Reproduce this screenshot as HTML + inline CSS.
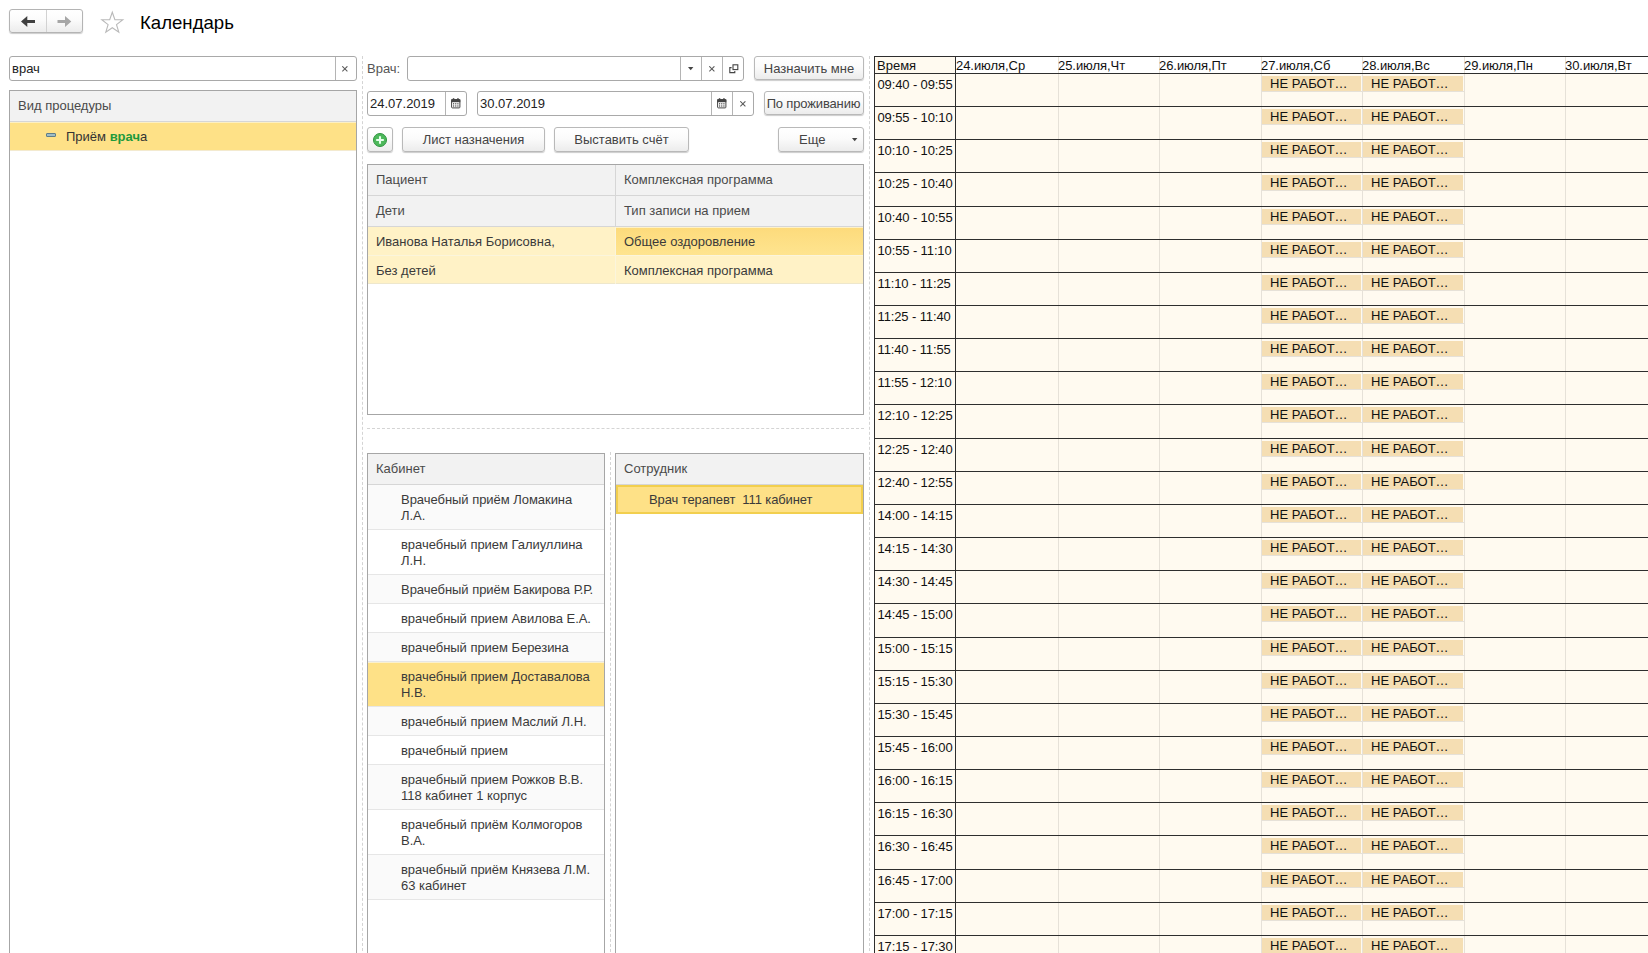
<!DOCTYPE html>
<html lang="ru"><head><meta charset="utf-8"><title>Календарь</title>
<style>
html,body{margin:0;padding:0}
body{width:1648px;height:953px;overflow:hidden;background:#fff;position:relative;font-family:"Liberation Sans",Arial,sans-serif;font-size:13px;color:#3a3a3a}
.a{position:absolute;box-sizing:border-box}
.t{position:absolute;white-space:nowrap;line-height:16px}
.inp{position:absolute;box-sizing:border-box;border:1px solid #a9a9a9;border-radius:3px;background:#fff}
.dv{position:absolute;top:0;bottom:0;width:1px;background:#b4b4b4}
.btn{position:absolute;box-sizing:border-box;border:1px solid #b9b9b9;border-radius:3px;background:linear-gradient(#ffffff 0%,#fbfbfb 45%,#ececec 100%);box-shadow:0 1px 1px rgba(0,0,0,.2);text-align:center;white-space:nowrap;color:#444}
.pan{position:absolute;box-sizing:border-box;border:1px solid #a6a6a6;background:#fff;overflow:hidden}
.hd{position:absolute;left:0;right:0;background:#f2f2f2;border-bottom:1px solid #d6d6d6;box-sizing:border-box}
.row{position:absolute;left:0;right:0;box-sizing:border-box;border-bottom:1px solid #e6e6e6}
.vd{position:absolute;width:0;border-left:1px dashed #d4d4d4}
.hdash{position:absolute;height:0;border-top:1px dashed #d4d4d4}
.cal{position:absolute;left:874px;top:56px;width:774px;height:897px;background:#fffaf0;overflow:hidden}
.hl{position:absolute;left:0;right:0;height:1px;background:#2e2e2e}
.vl{position:absolute;top:0;bottom:0;width:1px;background:#e6e1d8}
.sl{position:absolute;height:1px;background:#e6e1d8}
.ct{position:absolute;white-space:nowrap;color:#111;line-height:15px;font-size:13px}
.nw{position:absolute;box-sizing:border-box;background:#f5deb3;color:#111;line-height:15px;white-space:nowrap;overflow:hidden}
</style></head><body>
<div class="btn" style="left:9px;top:9px;width:74px;height:24px;border-color:#b4b4b4"></div>
<div class="a" style="left:46px;top:10px;width:1px;height:22px;background:#d2d2d2"></div>
<svg class="a" style="left:9px;top:9px" width="74" height="24" viewBox="0 0 74 24">
<path d="M12 12.5 L18.3 7 L18.3 11 L26 11 L26 14 L18.3 14 L18.3 18 Z" fill="#404040"/>
<path d="M62.3 12.5 L56 7 L56 11 L48.5 11 L48.5 14 L56 14 L56 18 Z" fill="#a6a6a6"/>
</svg>
<svg class="a" style="left:100px;top:10px" width="25" height="25" viewBox="0 0 25 25"><path d="M12.3 2.2 L14.9 9.6 L22.8 9.8 L16.5 14.6 L18.8 22.2 L12.3 17.7 L5.8 22.2 L8.1 14.6 L1.8 9.8 L9.7 9.6 Z" fill="#fff" stroke="#b9b9b9" stroke-width="1.1" stroke-linejoin="miter"/></svg>
<div class="t" style="left:140px;top:11px;font-size:18.6px;line-height:24px;color:#000">Календарь</div>
<div class="inp" style="left:9px;top:56px;width:348px;height:25px"><div class="dv" style="left:325px"></div></div>
<div class="t" style="left:12px;top:61px;color:#222">врач</div>
<svg class="a" style="left:342px;top:66px" width="6" height="6" viewBox="0 0 6 6"><path d="M0.3 0.3 L5.4 5.4 M5.4 0.3 L0.3 5.4" stroke="#5a5a5a" stroke-width="1.05" fill="none"/></svg>
<div class="pan" style="left:9px;top:90px;width:348px;height:880px">
 <div class="hd" style="top:0;height:31px"></div>
 <div class="row" style="top:31px;height:29px;background:#fee187;border-top:1px solid #fdf0c4;border-bottom:1px solid #f3ead0"></div>
</div>
<div class="t" style="left:18px;top:98px;color:#4a4a4a">Вид процедуры</div>
<div class="a" style="left:46px;top:133px;width:10px;height:4px;background:#9fbcc4;border:1px solid #5f7d88;border-radius:1px"></div>
<div class="t" style="left:66px;top:129px;color:#333">Приём <span style="color:#1f9a3c;font-weight:bold">врач</span><span style="color:#333">а</span></div>
<div class="vd" style="left:362px;top:56px;height:900px"></div>
<div class="vd" style="left:869px;top:56px;height:900px"></div>
<div class="vd" style="left:610px;top:452px;height:510px"></div>
<div class="hdash" style="left:367px;top:428px;width:497px"></div>
<div class="t" style="left:367px;top:61px;color:#555">Врач:</div>
<div class="inp" style="left:407px;top:56px;width:337px;height:25px"><div class="dv" style="left:272px"></div><div class="dv" style="left:293px"></div><div class="dv" style="left:314px"></div></div>
<svg class="a" style="left:688px;top:67px" width="6" height="4"><path d="M0 0 L5.4 0 L2.7 3.2 Z" fill="#444"/></svg>
<svg class="a" style="left:709px;top:66px" width="6" height="6" viewBox="0 0 6 6"><path d="M0.3 0.3 L5.4 5.4 M5.4 0.3 L0.3 5.4" stroke="#5a5a5a" stroke-width="1.05" fill="none"/></svg>
<svg class="a" style="left:729px;top:64px" width="10" height="10" viewBox="0 0 10 10"><rect x="4" y="0.8" width="4.8" height="4.8" fill="none" stroke="#444" stroke-width="1.1"/><path d="M2.6 3.6 H0.8 V8.6 H5.8 V7" fill="none" stroke="#444" stroke-width="1.1"/></svg>
<div class="btn" style="left:754px;top:56px;width:110px;height:24px;line-height:23px">Назначить мне</div>

<div class="inp" style="left:367px;top:91px;width:100px;height:25px"><div class="dv" style="left:77px"></div></div>
<div class="t" style="left:370px;top:96px;color:#222">24.07.2019</div>
<div class="inp" style="left:477px;top:91px;width:277px;height:25px"><div class="dv" style="left:233px"></div><div class="dv" style="left:254px"></div></div>
<div class="t" style="left:480px;top:96px;color:#222">30.07.2019</div>
<svg class="a" style="left:740px;top:101px" width="6" height="6" viewBox="0 0 6 6"><path d="M0.3 0.3 L5.4 5.4 M5.4 0.3 L0.3 5.4" stroke="#5a5a5a" stroke-width="1.05" fill="none"/></svg>
<div class="btn" style="left:764px;top:91px;width:100px;height:24px;line-height:23px;letter-spacing:-0.15px;padding-right:1px">По проживанию</div>
<svg class="a" style="left:451px;top:98px" width="10" height="11" viewBox="0 0 10 11"><rect x="0.6" y="1.6" width="8.3" height="8.3" rx="0.8" fill="#fff" stroke="#444" stroke-width="1"/><rect x="0.2" y="1.2" width="9.1" height="3" fill="#444"/><rect x="1.8" y="0.2" width="1.5" height="1.6" fill="#444"/><rect x="6.2" y="0.2" width="1.5" height="1.6" fill="#444"/><g fill="#444"><rect x="2" y="5.2" width="1.2" height="1.2"/><rect x="4.15" y="5.2" width="1.2" height="1.2"/><rect x="6.3" y="5.2" width="1.2" height="1.2"/><rect x="2" y="7.4" width="1.2" height="1.2"/><rect x="4.15" y="7.4" width="1.2" height="1.2"/><rect x="6.3" y="7.4" width="1.2" height="1.2"/></g></svg><svg class="a" style="left:717px;top:98px" width="10" height="11" viewBox="0 0 10 11"><rect x="0.6" y="1.6" width="8.3" height="8.3" rx="0.8" fill="#fff" stroke="#444" stroke-width="1"/><rect x="0.2" y="1.2" width="9.1" height="3" fill="#444"/><rect x="1.8" y="0.2" width="1.5" height="1.6" fill="#444"/><rect x="6.2" y="0.2" width="1.5" height="1.6" fill="#444"/><g fill="#444"><rect x="2" y="5.2" width="1.2" height="1.2"/><rect x="4.15" y="5.2" width="1.2" height="1.2"/><rect x="6.3" y="5.2" width="1.2" height="1.2"/><rect x="2" y="7.4" width="1.2" height="1.2"/><rect x="4.15" y="7.4" width="1.2" height="1.2"/><rect x="6.3" y="7.4" width="1.2" height="1.2"/></g></svg><div class="btn" style="left:367px;top:127px;width:26px;height:25px"></div>
<svg class="a" style="left:372px;top:132px" width="16" height="16" viewBox="0 0 16 16"><circle cx="8" cy="8" r="6.5" fill="#4cb85a" stroke="#2f9440" stroke-width="1"/><path d="M8 4.2 V11.8 M4.2 8 H11.8" stroke="#e6ffec" stroke-width="2.1"/></svg>
<div class="btn" style="left:402px;top:127px;width:143px;height:25px;line-height:24px">Лист назначения</div>
<div class="btn" style="left:554px;top:127px;width:135px;height:25px;line-height:24px">Выставить счёт</div>
<div class="btn" style="left:778px;top:127px;width:86px;height:25px;line-height:24px;text-align:left;padding-left:20px">Еще</div>
<svg class="a" style="left:852px;top:138px" width="6" height="4"><path d="M0 0 L5.4 0 L2.7 3.2 Z" fill="#444"/></svg>
<div class="pan" style="left:367px;top:164px;width:497px;height:251px">
 <div class="hd" style="top:0;height:31px"></div>
 <div class="hd" style="top:31px;height:31px"></div>
 <div class="row" style="top:62px;height:29px;background:#fff2c6;border-bottom:1px solid #fbf5dc"></div>
 <div class="row" style="top:91px;height:28px;background:#fff2c6;border-bottom:1px solid #eee7cc"></div>
 <div class="a" style="left:248px;top:63px;width:248px;height:27px;background:linear-gradient(#fddb7c,#fee48f)"></div>
 <div class="a" style="left:247px;top:0;width:1px;height:62px;background:#d6d6d6"></div>
 <div class="a" style="left:247px;top:62px;width:1px;height:57px;background:#fbf5dc"></div>
</div>
<div class="t" style="left:376px;top:172px;color:#4a4a4a">Пациент</div>
<div class="t" style="left:624px;top:172px;color:#4a4a4a">Комплексная программа</div>
<div class="t" style="left:376px;top:203px;color:#4a4a4a">Дети</div>
<div class="t" style="left:624px;top:203px;color:#4a4a4a">Тип записи на прием</div>
<div class="t" style="left:376px;top:234px">Иванова Наталья Борисовна,</div>
<div class="t" style="left:624px;top:234px">Общее оздоровление</div>
<div class="t" style="left:376px;top:263px">Без детей</div>
<div class="t" style="left:624px;top:263px">Комплексная программа</div>
<div class="pan" style="left:367px;top:453px;width:238px;height:520px">
 <div class="hd" style="top:0;height:31px"></div>
 <div class="row" style="top:31px;height:45px;background:#fafafa"></div>
 <div class="row" style="top:76px;height:45px;background:#ffffff"></div>
 <div class="row" style="top:121px;height:29px;background:#fafafa"></div>
 <div class="row" style="top:150px;height:29px;background:#ffffff"></div>
 <div class="row" style="top:179px;height:29px;background:#fafafa"></div>
 <div class="row" style="top:208px;height:45px;background:#fee187;border-top:1px solid #fbf1cf"></div>
 <div class="row" style="top:253px;height:29px;background:#fafafa"></div>
 <div class="row" style="top:282px;height:29px;background:#ffffff"></div>
 <div class="row" style="top:311px;height:45px;background:#fafafa"></div>
 <div class="row" style="top:356px;height:45px;background:#ffffff"></div>
 <div class="row" style="top:401px;height:45px;background:#fafafa"></div>
</div>
<div class="t" style="left:376px;top:461px;color:#4a4a4a">Кабинет</div>
<div class="t" style="left:401px;top:492px;letter-spacing:-0.04px">Врачебный приём Ломакина</div>
<div class="t" style="left:401px;top:508px;letter-spacing:-0.04px">Л.А.</div>
<div class="t" style="left:401px;top:537px;letter-spacing:-0.04px">врачебный прием Галиуллина</div>
<div class="t" style="left:401px;top:553px;letter-spacing:-0.04px">Л.Н.</div>
<div class="t" style="left:401px;top:582px;letter-spacing:-0.04px">Врачебный приём Бакирова Р.Р.</div>
<div class="t" style="left:401px;top:611px;letter-spacing:-0.04px">врачебный прием Авилова Е.А.</div>
<div class="t" style="left:401px;top:640px;letter-spacing:-0.04px">врачебный прием Березина</div>
<div class="t" style="left:401px;top:669px;letter-spacing:-0.04px">врачебный прием Доставалова</div>
<div class="t" style="left:401px;top:685px;letter-spacing:-0.04px">Н.В.</div>
<div class="t" style="left:401px;top:714px;letter-spacing:-0.04px">врачебный прием Маслий Л.Н.</div>
<div class="t" style="left:401px;top:743px;letter-spacing:-0.04px">врачебный прием</div>
<div class="t" style="left:401px;top:772px;letter-spacing:-0.04px">врачебный прием Рожков В.В.</div>
<div class="t" style="left:401px;top:788px;letter-spacing:-0.04px">118 кабинет 1 корпус</div>
<div class="t" style="left:401px;top:817px;letter-spacing:-0.04px">врачебный приём Колмогоров</div>
<div class="t" style="left:401px;top:833px;letter-spacing:-0.04px">В.А.</div>
<div class="t" style="left:401px;top:862px;letter-spacing:-0.04px">врачебный приём Князева Л.М.</div>
<div class="t" style="left:401px;top:878px;letter-spacing:-0.04px">63 кабинет</div>
<div class="pan" style="left:615px;top:453px;width:249px;height:520px">
 <div class="hd" style="top:0;height:31px"></div>
 <div class="a" style="left:0;top:31px;width:247px;height:29px;background:#fee187;border:2px solid #f2cf4e"></div>
</div>
<div class="t" style="left:624px;top:461px;color:#4a4a4a">Сотрудник</div>
<div class="t" style="left:649px;top:492px;letter-spacing:-0.1px">Врач терапевт&nbsp; 111 кабинет</div>
<div class="cal">
 <div class="a" style="left:82px;top:0;width:700px;height:17px;background:#fff"></div>
 <div class="vl" style="left:184px"></div>
 <div class="vl" style="left:285px"></div>
 <div class="vl" style="left:387px"></div>
 <div class="vl" style="left:488px"></div>
 <div class="vl" style="left:590px"></div>
 <div class="vl" style="left:691px"></div>
 <div class="hl" style="top:17px"></div>
 <div class="ct" style="left:3.5px;top:21px;letter-spacing:-0.12px">09:40 - 09:55</div>
 <div class="sl" style="left:387px;top:35px;width:203px"></div>
 <div class="nw" style="left:388px;top:20px;width:99px;height:15px;padding-left:8px">НЕ РАБОТ…</div>
 <div class="nw" style="left:489px;top:20px;width:100px;height:15px;padding-left:8px">НЕ РАБОТ…</div>
 <div class="hl" style="top:50px"></div>
 <div class="ct" style="left:3.5px;top:54px;letter-spacing:-0.12px">09:55 - 10:10</div>
 <div class="sl" style="left:387px;top:68px;width:203px"></div>
 <div class="nw" style="left:388px;top:53px;width:99px;height:15px;padding-left:8px">НЕ РАБОТ…</div>
 <div class="nw" style="left:489px;top:53px;width:100px;height:15px;padding-left:8px">НЕ РАБОТ…</div>
 <div class="hl" style="top:83px"></div>
 <div class="ct" style="left:3.5px;top:87px;letter-spacing:-0.12px">10:10 - 10:25</div>
 <div class="sl" style="left:387px;top:101px;width:203px"></div>
 <div class="nw" style="left:388px;top:86px;width:99px;height:15px;padding-left:8px">НЕ РАБОТ…</div>
 <div class="nw" style="left:489px;top:86px;width:100px;height:15px;padding-left:8px">НЕ РАБОТ…</div>
 <div class="hl" style="top:116px"></div>
 <div class="ct" style="left:3.5px;top:120px;letter-spacing:-0.12px">10:25 - 10:40</div>
 <div class="sl" style="left:387px;top:134px;width:203px"></div>
 <div class="nw" style="left:388px;top:119px;width:99px;height:15px;padding-left:8px">НЕ РАБОТ…</div>
 <div class="nw" style="left:489px;top:119px;width:100px;height:15px;padding-left:8px">НЕ РАБОТ…</div>
 <div class="hl" style="top:150px"></div>
 <div class="ct" style="left:3.5px;top:154px;letter-spacing:-0.12px">10:40 - 10:55</div>
 <div class="sl" style="left:387px;top:168px;width:203px"></div>
 <div class="nw" style="left:388px;top:153px;width:99px;height:15px;padding-left:8px">НЕ РАБОТ…</div>
 <div class="nw" style="left:489px;top:153px;width:100px;height:15px;padding-left:8px">НЕ РАБОТ…</div>
 <div class="hl" style="top:183px"></div>
 <div class="ct" style="left:3.5px;top:187px;letter-spacing:-0.12px">10:55 - 11:10</div>
 <div class="sl" style="left:387px;top:201px;width:203px"></div>
 <div class="nw" style="left:388px;top:186px;width:99px;height:15px;padding-left:8px">НЕ РАБОТ…</div>
 <div class="nw" style="left:489px;top:186px;width:100px;height:15px;padding-left:8px">НЕ РАБОТ…</div>
 <div class="hl" style="top:216px"></div>
 <div class="ct" style="left:3.5px;top:220px;letter-spacing:-0.12px">11:10 - 11:25</div>
 <div class="sl" style="left:387px;top:234px;width:203px"></div>
 <div class="nw" style="left:388px;top:219px;width:99px;height:15px;padding-left:8px">НЕ РАБОТ…</div>
 <div class="nw" style="left:489px;top:219px;width:100px;height:15px;padding-left:8px">НЕ РАБОТ…</div>
 <div class="hl" style="top:249px"></div>
 <div class="ct" style="left:3.5px;top:253px;letter-spacing:-0.12px">11:25 - 11:40</div>
 <div class="sl" style="left:387px;top:267px;width:203px"></div>
 <div class="nw" style="left:388px;top:252px;width:99px;height:15px;padding-left:8px">НЕ РАБОТ…</div>
 <div class="nw" style="left:489px;top:252px;width:100px;height:15px;padding-left:8px">НЕ РАБОТ…</div>
 <div class="hl" style="top:282px"></div>
 <div class="ct" style="left:3.5px;top:286px;letter-spacing:-0.12px">11:40 - 11:55</div>
 <div class="sl" style="left:387px;top:300px;width:203px"></div>
 <div class="nw" style="left:388px;top:285px;width:99px;height:15px;padding-left:8px">НЕ РАБОТ…</div>
 <div class="nw" style="left:489px;top:285px;width:100px;height:15px;padding-left:8px">НЕ РАБОТ…</div>
 <div class="hl" style="top:315px"></div>
 <div class="ct" style="left:3.5px;top:319px;letter-spacing:-0.12px">11:55 - 12:10</div>
 <div class="sl" style="left:387px;top:333px;width:203px"></div>
 <div class="nw" style="left:388px;top:318px;width:99px;height:15px;padding-left:8px">НЕ РАБОТ…</div>
 <div class="nw" style="left:489px;top:318px;width:100px;height:15px;padding-left:8px">НЕ РАБОТ…</div>
 <div class="hl" style="top:348px"></div>
 <div class="ct" style="left:3.5px;top:352px;letter-spacing:-0.12px">12:10 - 12:25</div>
 <div class="sl" style="left:387px;top:366px;width:203px"></div>
 <div class="nw" style="left:388px;top:351px;width:99px;height:15px;padding-left:8px">НЕ РАБОТ…</div>
 <div class="nw" style="left:489px;top:351px;width:100px;height:15px;padding-left:8px">НЕ РАБОТ…</div>
 <div class="hl" style="top:382px"></div>
 <div class="ct" style="left:3.5px;top:386px;letter-spacing:-0.12px">12:25 - 12:40</div>
 <div class="sl" style="left:387px;top:400px;width:203px"></div>
 <div class="nw" style="left:388px;top:385px;width:99px;height:15px;padding-left:8px">НЕ РАБОТ…</div>
 <div class="nw" style="left:489px;top:385px;width:100px;height:15px;padding-left:8px">НЕ РАБОТ…</div>
 <div class="hl" style="top:415px"></div>
 <div class="ct" style="left:3.5px;top:419px;letter-spacing:-0.12px">12:40 - 12:55</div>
 <div class="sl" style="left:387px;top:433px;width:203px"></div>
 <div class="nw" style="left:388px;top:418px;width:99px;height:15px;padding-left:8px">НЕ РАБОТ…</div>
 <div class="nw" style="left:489px;top:418px;width:100px;height:15px;padding-left:8px">НЕ РАБОТ…</div>
 <div class="hl" style="top:448px"></div>
 <div class="ct" style="left:3.5px;top:452px;letter-spacing:-0.12px">14:00 - 14:15</div>
 <div class="sl" style="left:387px;top:466px;width:203px"></div>
 <div class="nw" style="left:388px;top:451px;width:99px;height:15px;padding-left:8px">НЕ РАБОТ…</div>
 <div class="nw" style="left:489px;top:451px;width:100px;height:15px;padding-left:8px">НЕ РАБОТ…</div>
 <div class="hl" style="top:481px"></div>
 <div class="ct" style="left:3.5px;top:485px;letter-spacing:-0.12px">14:15 - 14:30</div>
 <div class="sl" style="left:387px;top:499px;width:203px"></div>
 <div class="nw" style="left:388px;top:484px;width:99px;height:15px;padding-left:8px">НЕ РАБОТ…</div>
 <div class="nw" style="left:489px;top:484px;width:100px;height:15px;padding-left:8px">НЕ РАБОТ…</div>
 <div class="hl" style="top:514px"></div>
 <div class="ct" style="left:3.5px;top:518px;letter-spacing:-0.12px">14:30 - 14:45</div>
 <div class="sl" style="left:387px;top:532px;width:203px"></div>
 <div class="nw" style="left:388px;top:517px;width:99px;height:15px;padding-left:8px">НЕ РАБОТ…</div>
 <div class="nw" style="left:489px;top:517px;width:100px;height:15px;padding-left:8px">НЕ РАБОТ…</div>
 <div class="hl" style="top:547px"></div>
 <div class="ct" style="left:3.5px;top:551px;letter-spacing:-0.12px">14:45 - 15:00</div>
 <div class="sl" style="left:387px;top:565px;width:203px"></div>
 <div class="nw" style="left:388px;top:550px;width:99px;height:15px;padding-left:8px">НЕ РАБОТ…</div>
 <div class="nw" style="left:489px;top:550px;width:100px;height:15px;padding-left:8px">НЕ РАБОТ…</div>
 <div class="hl" style="top:581px"></div>
 <div class="ct" style="left:3.5px;top:585px;letter-spacing:-0.12px">15:00 - 15:15</div>
 <div class="sl" style="left:387px;top:599px;width:203px"></div>
 <div class="nw" style="left:388px;top:584px;width:99px;height:15px;padding-left:8px">НЕ РАБОТ…</div>
 <div class="nw" style="left:489px;top:584px;width:100px;height:15px;padding-left:8px">НЕ РАБОТ…</div>
 <div class="hl" style="top:614px"></div>
 <div class="ct" style="left:3.5px;top:618px;letter-spacing:-0.12px">15:15 - 15:30</div>
 <div class="sl" style="left:387px;top:632px;width:203px"></div>
 <div class="nw" style="left:388px;top:617px;width:99px;height:15px;padding-left:8px">НЕ РАБОТ…</div>
 <div class="nw" style="left:489px;top:617px;width:100px;height:15px;padding-left:8px">НЕ РАБОТ…</div>
 <div class="hl" style="top:647px"></div>
 <div class="ct" style="left:3.5px;top:651px;letter-spacing:-0.12px">15:30 - 15:45</div>
 <div class="sl" style="left:387px;top:665px;width:203px"></div>
 <div class="nw" style="left:388px;top:650px;width:99px;height:15px;padding-left:8px">НЕ РАБОТ…</div>
 <div class="nw" style="left:489px;top:650px;width:100px;height:15px;padding-left:8px">НЕ РАБОТ…</div>
 <div class="hl" style="top:680px"></div>
 <div class="ct" style="left:3.5px;top:684px;letter-spacing:-0.12px">15:45 - 16:00</div>
 <div class="sl" style="left:387px;top:698px;width:203px"></div>
 <div class="nw" style="left:388px;top:683px;width:99px;height:15px;padding-left:8px">НЕ РАБОТ…</div>
 <div class="nw" style="left:489px;top:683px;width:100px;height:15px;padding-left:8px">НЕ РАБОТ…</div>
 <div class="hl" style="top:713px"></div>
 <div class="ct" style="left:3.5px;top:717px;letter-spacing:-0.12px">16:00 - 16:15</div>
 <div class="sl" style="left:387px;top:731px;width:203px"></div>
 <div class="nw" style="left:388px;top:716px;width:99px;height:15px;padding-left:8px">НЕ РАБОТ…</div>
 <div class="nw" style="left:489px;top:716px;width:100px;height:15px;padding-left:8px">НЕ РАБОТ…</div>
 <div class="hl" style="top:746px"></div>
 <div class="ct" style="left:3.5px;top:750px;letter-spacing:-0.12px">16:15 - 16:30</div>
 <div class="sl" style="left:387px;top:764px;width:203px"></div>
 <div class="nw" style="left:388px;top:749px;width:99px;height:15px;padding-left:8px">НЕ РАБОТ…</div>
 <div class="nw" style="left:489px;top:749px;width:100px;height:15px;padding-left:8px">НЕ РАБОТ…</div>
 <div class="hl" style="top:779px"></div>
 <div class="ct" style="left:3.5px;top:783px;letter-spacing:-0.12px">16:30 - 16:45</div>
 <div class="sl" style="left:387px;top:797px;width:203px"></div>
 <div class="nw" style="left:388px;top:782px;width:99px;height:15px;padding-left:8px">НЕ РАБОТ…</div>
 <div class="nw" style="left:489px;top:782px;width:100px;height:15px;padding-left:8px">НЕ РАБОТ…</div>
 <div class="hl" style="top:813px"></div>
 <div class="ct" style="left:3.5px;top:817px;letter-spacing:-0.12px">16:45 - 17:00</div>
 <div class="sl" style="left:387px;top:831px;width:203px"></div>
 <div class="nw" style="left:388px;top:816px;width:99px;height:15px;padding-left:8px">НЕ РАБОТ…</div>
 <div class="nw" style="left:489px;top:816px;width:100px;height:15px;padding-left:8px">НЕ РАБОТ…</div>
 <div class="hl" style="top:846px"></div>
 <div class="ct" style="left:3.5px;top:850px;letter-spacing:-0.12px">17:00 - 17:15</div>
 <div class="sl" style="left:387px;top:864px;width:203px"></div>
 <div class="nw" style="left:388px;top:849px;width:99px;height:15px;padding-left:8px">НЕ РАБОТ…</div>
 <div class="nw" style="left:489px;top:849px;width:100px;height:15px;padding-left:8px">НЕ РАБОТ…</div>
 <div class="hl" style="top:879px"></div>
 <div class="ct" style="left:3.5px;top:883px;letter-spacing:-0.12px">17:15 - 17:30</div>
 <div class="sl" style="left:387px;top:897px;width:203px"></div>
 <div class="nw" style="left:388px;top:882px;width:99px;height:15px;padding-left:8px">НЕ РАБОТ…</div>
 <div class="nw" style="left:489px;top:882px;width:100px;height:15px;padding-left:8px">НЕ РАБОТ…</div>
 <div class="hl" style="top:0"></div>
 <div class="a" style="left:0;top:0;width:1px;height:900px;background:#2e2e2e"></div>
 <div class="a" style="left:81px;top:0;width:1px;height:900px;background:#2e2e2e"></div>
 <div class="ct" style="left:3px;top:2px">Время</div>
 <div class="ct" style="left:82px;top:2px;letter-spacing:-0.06px">24.июля,Ср</div>
 <div class="ct" style="left:184px;top:2px;letter-spacing:-0.06px">25.июля,Чт</div>
 <div class="ct" style="left:285px;top:2px;letter-spacing:-0.06px">26.июля,Пт</div>
 <div class="ct" style="left:387px;top:2px;letter-spacing:-0.06px">27.июля,Сб</div>
 <div class="ct" style="left:488px;top:2px;letter-spacing:-0.06px">28.июля,Вс</div>
 <div class="ct" style="left:590px;top:2px;letter-spacing:-0.06px">29.июля,Пн</div>
 <div class="ct" style="left:691px;top:2px;letter-spacing:-0.06px">30.июля,Вт</div>
</div>
</body></html>
